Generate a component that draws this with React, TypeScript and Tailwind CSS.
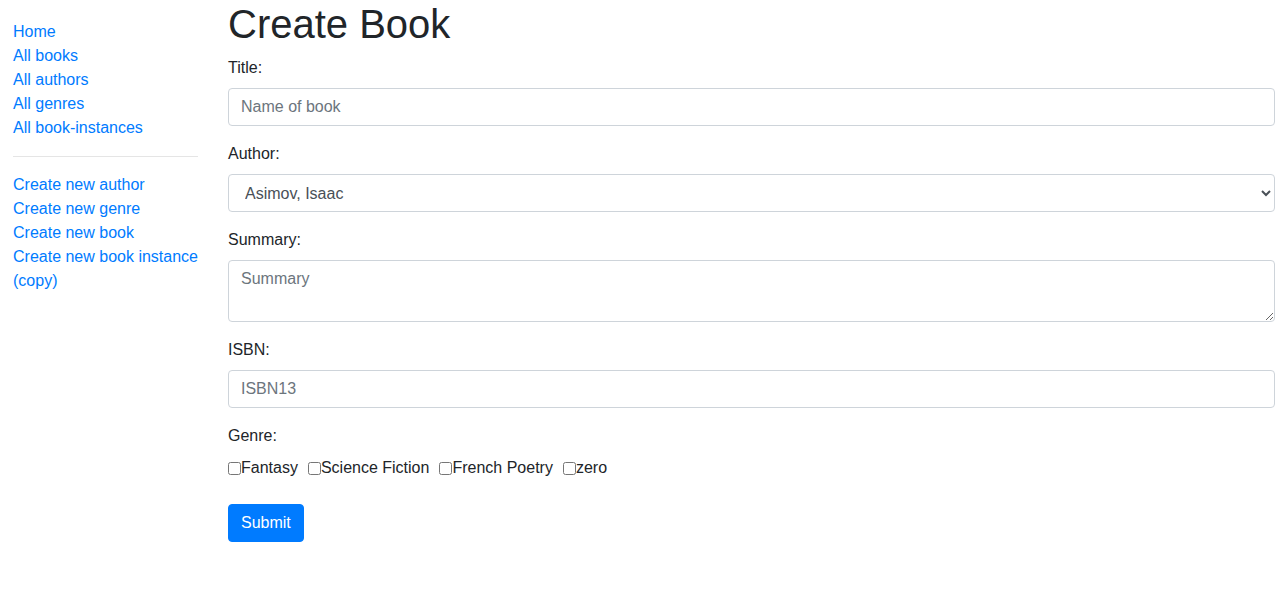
import React from "react";

const font = { fontFamily: '"Liberation Sans", Arial, sans-serif' };

export default function App() {
  const top = ["Home", "All books", "All authors", "All genres", "All book-instances"];
  const bottom = ["Create new author", "Create new genre", "Create new book"];
  const genres = ["Fantasy", "Science Fiction", "French Poetry", "zero"];
  const control =
    "block w-full h-[38px] px-[12px] py-[6px] text-[16px] leading-[24px] text-[#495057] bg-white border border-[#ced4da] rounded-[4px] placeholder:text-[#6c757d] outline-none";
  return (
    <div className="min-h-[595px] bg-white text-[#212529] text-[16px] leading-[24px]" style={font}>
      <div className="flex">
        <div className="w-[198px] shrink-0 pl-[13px] pt-[20px]">
          <ul className="list-none">
            {top.map((t) => (
              <li key={t}>
                <a href="#" className="text-[#007bff]">{t}</a>
              </li>
            ))}
          </ul>
          <hr className="my-[16px] border-0 border-t border-[#e5e5e5]" />
          <ul className="list-none">
            {bottom.map((t) => (
              <li key={t}>
                <a href="#" className="text-[#007bff]">{t}</a>
              </li>
            ))}
            <li>
              <a href="#" className="text-[#007bff]">
                <span className="whitespace-nowrap">Create new book instance</span>
                <br />
                (copy)
              </a>
            </li>
          </ul>
        </div>
        <div className="flex-1 ml-[30px] mr-[11px]">
          <h1 className="text-[40px] leading-[48px] font-medium mb-[8px]">Create Book</h1>
          <form onSubmit={(e) => e.preventDefault()}>
            <div className="mb-[16px]">
              <label className="block mb-[8px]">Title:</label>
              <input className={control} placeholder="Name of book" />
            </div>
            <div className="mb-[16px]">
              <label className="block mb-[8px]">Author:</label>
              <select className={control} defaultValue="a">
                <option value="a">Asimov, Isaac</option>
              </select>
            </div>
            <div className="mb-[16px]">
              <label className="block mb-[8px]">Summary:</label>
              <textarea
                className="block w-full h-[62px] px-[12px] py-[6px] text-[16px] leading-[24px] text-[#495057] bg-white border border-[#ced4da] rounded-[4px] placeholder:text-[#6c757d] outline-none"
                placeholder="Summary"
              />
            </div>
            <div className="mb-[16px]">
              <label className="block mb-[8px]">ISBN:</label>
              <input className={control} placeholder="ISBN13" />
            </div>
            <div className="mb-[24px]">
              <label className="block mb-[8px]">Genre:</label>
              <div className="flex items-center h-[24px]">
                {genres.map((g) => (
                  <div key={g} className="flex items-center pr-[10px]">
                    <input type="checkbox" id={g} className="m-0 w-[13px] h-[13px]" />
                    <label htmlFor={g}>{g}</label>
                  </div>
                ))}
              </div>
            </div>
            <button
              type="submit"
              className="h-[38px] px-[12px] text-[16px] leading-[24px] text-white bg-[#007bff] border border-[#007bff] rounded-[4px]"
            >
              Submit
            </button>
          </form>
        </div>
      </div>
    </div>
  );
}
